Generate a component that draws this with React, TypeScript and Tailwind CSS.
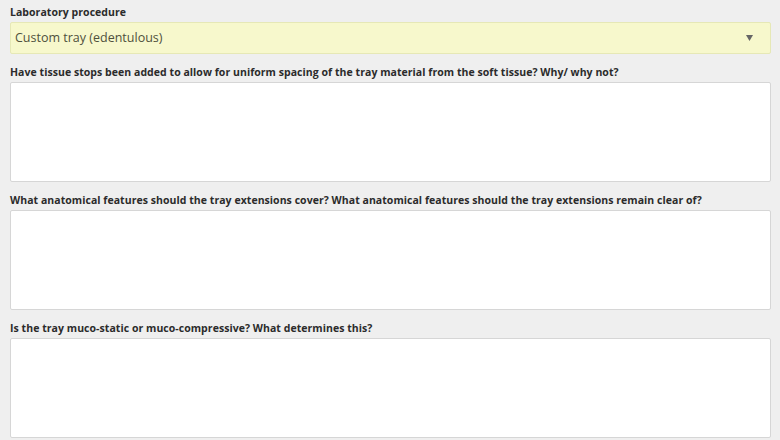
const QUESTIONS = [
    'Have tissue stops been added to allow for uniform spacing of the tray material from the soft tissue? Why/ why not?',
    'What anatomical features should the tray extensions cover? What anatomical features should the tray extensions remain clear of?',
    'Is the tray muco-static or muco-compressive? What determines this?',
];

function Label({ children }: { children: React.ReactNode }) {
    return (
        <div className="text-[10.5px] leading-[14px] font-bold text-[#2b2b2b] mb-[3px] tracking-[0.05px]">
            {children}
        </div>
    );
}

export default function App() {
    return (
        <div className="w-[780px] h-[440px] overflow-hidden bg-[#efefef] px-[10px] pt-[5px]"
            style={{ fontFamily: '"Open Sans", "Noto Sans", sans-serif' }}>
            <Label>Laboratory procedure</Label>
            <div className="relative h-[32px] w-[761px] rounded-[2px] border border-[#e6e8b6] bg-[#f7f8cc] flex items-center pl-[4px]">
                <span className="text-[12.5px] text-[#4f503c]">Custom tray (edentulous)</span>
                <svg className="absolute right-[17px] top-[12px]" width="7" height="6" viewBox="0 0 7 6">
                    <path d="M0 0 H7 L3.5 6 Z" fill="#666666" />
                </svg>
            </div>
            {QUESTIONS.map((q, i) => (
                <div key={i} className="mt-[11px]">
                    <Label>{q}</Label>
                    <textarea className="block h-[100px] w-[761px] resize-none rounded-[2px] border border-[#d6d6d6] bg-white outline-none" />
                </div>
            ))}
        </div>
    );
}
